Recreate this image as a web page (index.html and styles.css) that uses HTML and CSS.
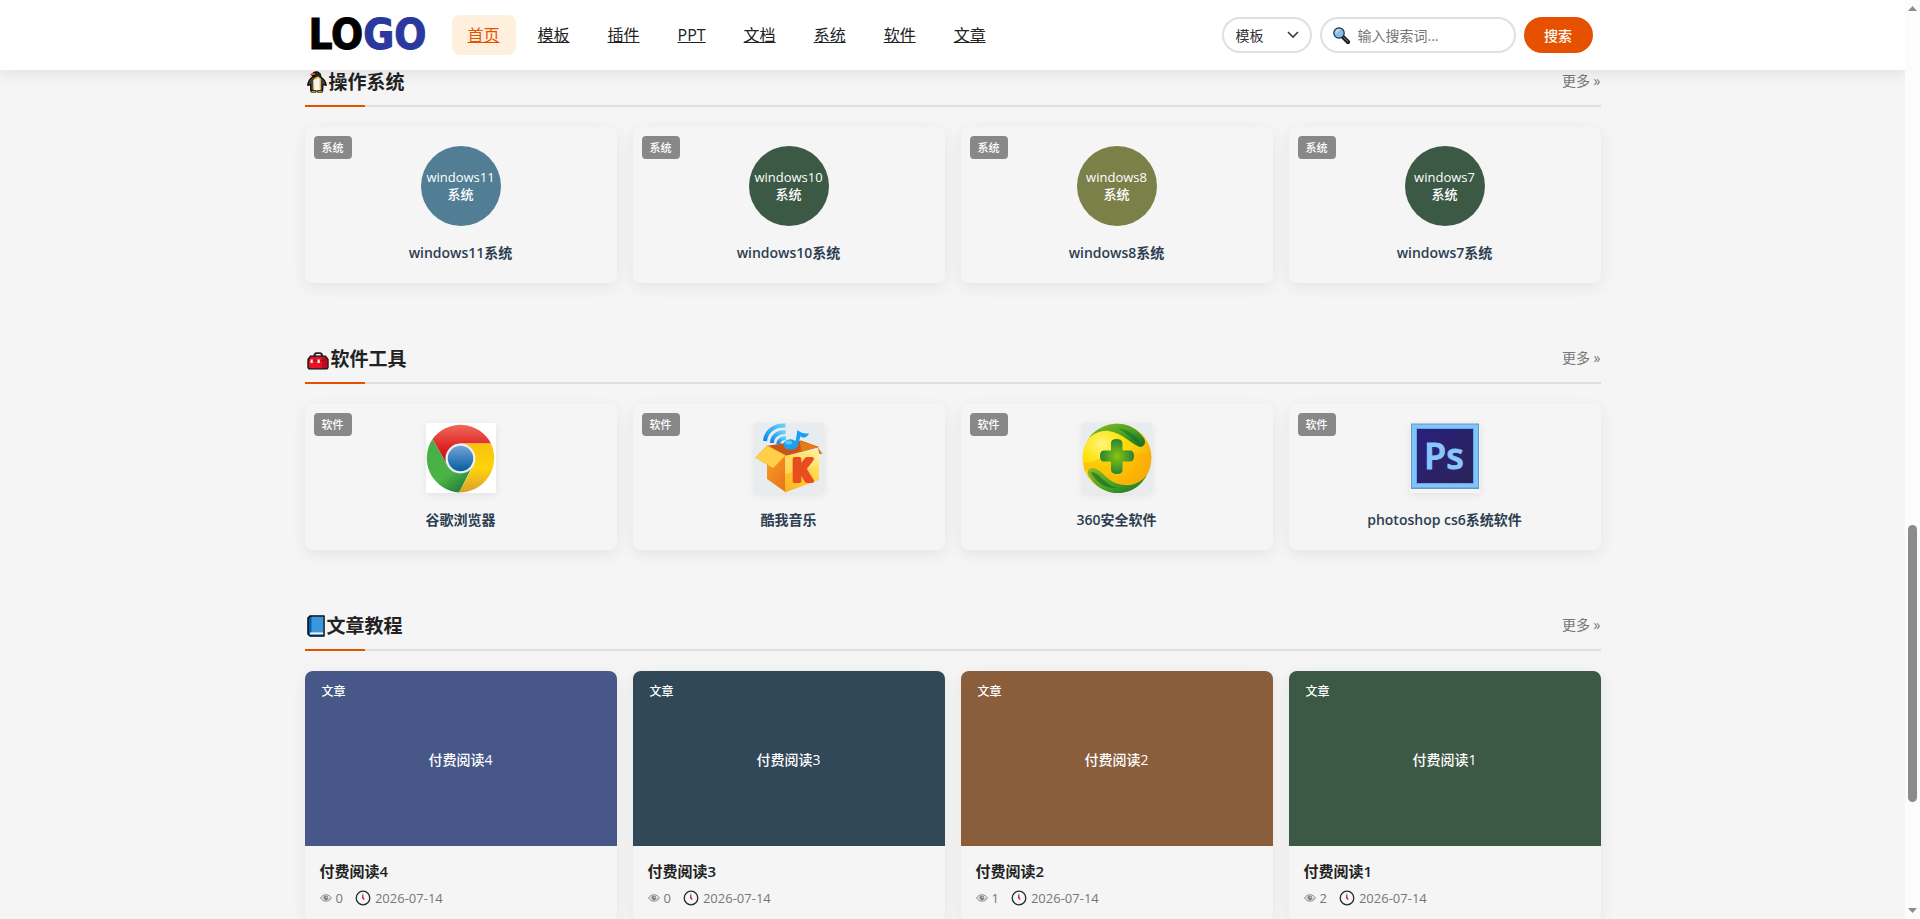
FILE: index.html
```
<!DOCTYPE html>
<html lang="zh-CN">
<head>
    <meta charset="UTF-8">
    <meta name="viewport" content="width=device-width, initial-scale=1.0">
    <title>首页</title>

    <link rel="stylesheet" href="styles.css">
</head>
<body>

    <!-- shared icons -->
    <svg class="sprite" aria-hidden="true">
        <symbol id="eye" viewBox="0 0 12 8">
            <path d="M.5 4C2 1.7 4 .8 6 .8S10 1.7 11.500 4C10 6.300 8 7.200 6 7.200S2 6.300 .5 4Z" fill="none" stroke="#8a8a8a" stroke-width="1"/>
            <circle cx="6" cy="4" r="2.400" fill="#858585"/>
            <path d="M2.500 4.500 4 2.500M8.500 5.500 10 4" stroke="#8a8a8a" stroke-width=".8"/>
            <circle cx="6.700" cy="3.300" r=".7" fill="#ddd"/>
        </symbol>
        <symbol id="clock" viewBox="0 0 16 16">
            <circle cx="8" cy="8" r="6.800" fill="#fafafa" stroke="#2b2b2b" stroke-width="1.300"/>
            <path d="M8 2.500v1M8 12.500v1M2.500 8h1M12.500 8h1" stroke="#aaa" stroke-width=".7"/>
            <path d="M7.800 8V4.300" stroke="#333" stroke-width="1"/>
            <path d="M7.600 6.500 8 8.500 9.300 9.600" fill="none" stroke="#e81224" stroke-width="1.300"/>
        </symbol>
    </svg>

    <div class="page">
        <header class="header">
            <div class="container header-inner">
                <a class="logo" href="#">LO<span>GO</span></a>
                <nav class="nav">
                    <a class="active" href="#">首页</a>
                    <a href="#">模板</a>
                    <a href="#">插件</a>
                    <a href="#">PPT</a>
                    <a href="#">文档</a>
                    <a href="#">系统</a>
                    <a href="#">软件</a>
                    <a href="#">文章</a>
                </nav>
                <form class="search">
                    <select class="search-type" aria-label="分类">
                        <option>模板</option>
                        <option>插件</option>
                        <option>PPT</option>
                        <option>文档</option>
                        <option>系统</option>
                        <option>软件</option>
                        <option>文章</option>
                    </select>
                    <label class="search-box">
                        <svg width="17" height="17" viewBox="0 0 17 17" aria-hidden="true">
                            <path d="M9.500 9.500 15 15" stroke="#111" stroke-width="4" stroke-linecap="round"/>
                            <path d="M10.500 10.200 14.800 14.500" stroke="#5c6468" stroke-width="1.500" stroke-linecap="round"/>
                            <circle cx="6" cy="6" r="5.200" fill="#83beec" stroke="#1d2b36" stroke-width="1.200"/>
                            <path d="M3 6.500A3.500 3.500 0 0 1 7 2.800" fill="none" stroke="#c5e5fb" stroke-width="1.400"/>
                        </svg>
                        <input type="text" placeholder="输入搜索词..." aria-label="输入搜索词">
                    </label>
                    <button class="search-btn" type="button">搜索</button>
                </form>
            </div>
        </header>

        <main class="container main">
            <section class="section">
                <div class="section-head">
                    <h2>
                        <svg width="20" height="22" viewBox="0 0 20 22" aria-hidden="true">
                            <path d="M6 5.500C2.500 8 .8 11 .8 14.500L3.500 13.500 3.800 20H15.600L16 13.500 19.200 14.500C19 11 16.500 8 13.800 6Z" fill="#3c4044" stroke="#090909" stroke-width="1.200" stroke-linejoin="round"/>
                            <path d="M4.800 4.500C4.500 2 7 .8 9.500 .8 12 .8 14 2.500 13.800 5.500L12.500 8 7.500 7.500 8.300 4.500Z" fill="#26292b" stroke="#080808"/>
                            <path d="M2.300 4.300 5.500 1.800 8 2.200 7.800 4Z" fill="#f25c16"/>
                            <path d="M6.200 9 12 5.800 13.800 9.500V18.500L10 20 6.200 18.500Z" fill="#f8f7f2"/>
                            <path d="M6.500 10.500V18M13.300 7V18" stroke="#e5b53a" stroke-width="1.300"/>
                            <path d="M7 8 11.500 6" stroke="#ffb900" stroke-width="1.400"/>
                            <path d="M4.200 19.500H9V21.300H4.200ZM10.500 19.500H15.300V21.300H10.500Z" fill="#f7b51d" stroke="#18140a" stroke-width=".8"/>
                        </svg>操作系统
                    </h2>
                    <a class="more" href="#">更多 »</a>
                </div>
                <div class="grid">
                    <a class="card" href="#">
                        <span class="tag">系统</span>
                        <span class="circle blue">windows11<br>系统</span>
                        <span class="card-title">windows11系统</span>
                    </a>
                    <a class="card" href="#">
                        <span class="tag">系统</span>
                        <span class="circle green">windows10<br>系统</span>
                        <span class="card-title">windows10系统</span>
                    </a>
                    <a class="card" href="#">
                        <span class="tag">系统</span>
                        <span class="circle olive">windows8<br>系统</span>
                        <span class="card-title">windows8系统</span>
                    </a>
                    <a class="card" href="#">
                        <span class="tag">系统</span>
                        <span class="circle green">windows7<br>系统</span>
                        <span class="card-title">windows7系统</span>
                    </a>
                </div>
            </section>

            <section class="section">
                <div class="section-head">
                    <h2>
                        <svg width="22" height="22" viewBox="0 0 22 22" aria-hidden="true">
                            <path d="M7.500 8V6.500L9 5.200H13.500L15 6.500V8" fill="none" stroke="#222" stroke-width="1.800"/>
                            <path d="M1 11.500 3.500 8.200H18.500L21 11.500V19.500L20 20.800H2L1 19.500Z" fill="#e81224" stroke="#0b0b0b" stroke-width="1.300" stroke-linejoin="round"/>
                            <path d="M15 9H18.200L20.300 11.800V20H15Z" fill="#b30f20"/>
                            <path d="M1.800 12.500H20.200" stroke="#a80f1b" stroke-width=".8"/>
                            <path d="M3.500 11.500H5.800V15H3.500ZM10.500 11.500H12.800V15H10.500Z" fill="#eee"/>
                        </svg>软件工具
                    </h2>
                    <a class="more" href="#">更多 »</a>
                </div>
                <div class="grid">
                    <a class="card" href="#">
                        <span class="tag">软件</span>
                        <svg class="app-icon" viewBox="0 0 70 70" aria-hidden="true">
                            <defs>
                                <linearGradient id="chromeRed" x1="0" y1="0" x2="0" y2="1">
                                    <stop offset="0" stop-color="#ee6a59"/>
                                    <stop offset=".6" stop-color="#df2327"/>
                                    <stop offset="1" stop-color="#b51720"/>
                                </linearGradient>
                                <linearGradient id="chromeYellow" x1="0" y1="0" x2="0" y2="1">
                                    <stop offset="0" stop-color="#f8c30b"/>
                                    <stop offset=".5" stop-color="#ffd30c"/>
                                    <stop offset="1" stop-color="#dba02c"/>
                                </linearGradient>
                                <linearGradient id="chromeGreen" x1="0" y1="0" x2=".6" y2="1">
                                    <stop offset="0" stop-color="#48ae45"/>
                                    <stop offset=".7" stop-color="#4bb347"/>
                                    <stop offset="1" stop-color="#2c863b"/>
                                </linearGradient>
                                <linearGradient id="chromeBlue" x1="0" y1="0" x2="0" y2="1">
                                    <stop offset="0" stop-color="#73a4d8"/>
                                    <stop offset="1" stop-color="#075c9f"/>
                                </linearGradient>
                            </defs>
                            <rect width="70" height="70" fill="#fff"/>
                            <path d="M6.500 16A34.500 34.500 0 0 1 65 20.500H34V35L19.500 39Z" fill="url(#chromeRed)"/>
                            <path d="M65 20.500A34.500 34.500 0 0 1 33 69.500L45 47 34.500 35V20.500Z" fill="url(#chromeYellow)"/>
                            <path d="M6.500 16A34.500 34.500 0 0 0 33 69.500L45 46 34.500 35 20 40Z" fill="url(#chromeGreen)"/>
                            <circle cx="34.500" cy="35.500" r="15" fill="#edf1f2"/>
                            <circle cx="34.500" cy="35.500" r="12.700" fill="url(#chromeBlue)"/>
                        </svg>
                        <span class="card-title">谷歌浏览器</span>
                    </a>
                    <a class="card" href="#">
                        <span class="tag">软件</span>
                        <svg class="app-icon" viewBox="0 0 70 70" aria-hidden="true">
                            <defs>
                                <linearGradient id="boxFront" x1="0" y1="1" x2="1" y2="0">
                                    <stop offset="0" stop-color="#fbb12a"/>
                                    <stop offset=".5" stop-color="#ffcf2d"/>
                                    <stop offset="1" stop-color="#fff08b"/>
                                </linearGradient>
                                <linearGradient id="boxSide" x1="0" y1="0" x2="1" y2="1">
                                    <stop offset="0" stop-color="#f99a24"/>
                                    <stop offset="1" stop-color="#e87319"/>
                                </linearGradient>
                                <linearGradient id="wave" x1="0" y1="1" x2="1" y2="0">
                                    <stop offset="0" stop-color="#0785ee"/>
                                    <stop offset="1" stop-color="#66d5fb"/>
                                </linearGradient>
                            </defs>
                            <rect width="70" height="70" fill="#e8ecef"/>
                            <path d="M12 23 47 17.500 65 24 32 33Z" fill="#c95617"/>
                            <path d="M46 18 65 24 47 29Z" fill="#e67b19"/>
                            <path d="M13 36 32 32V69.500L13 56Z" fill="url(#boxSide)"/>
                            <path d="M31 33 65 26V57L31 69.500Z" fill="url(#boxFront)"/>
                            <path d="M31 33 65 26V39C55 49 44 47 31 51Z" fill="#fff3a2" opacity=".4"/>
                            <path d="M1.500 34.500 13 22.500 31.500 32.500 19 45Z" fill="#ffcf47" stroke="#f1b538" stroke-width=".6"/>
                            <path d="M63.500 24 68.500 31H65.500Z" fill="#c67a18"/>
                            <g fill="none" stroke="url(#wave)" stroke-width="4">
                                <path d="M11 18C12 8 20 2 31.500 2.500"/>
                                <path d="M18 20C18 13 24 9 31.500 9"/>
                                <path d="M24 21C25 17 27 15 32 15"/>
                            </g>
                            <path d="M41 22 43.500 7C47 10 50 10.500 55 10.500 52 16 48 15 46.500 13L43.500 24Z" fill="#15a2f5"/>
                            <ellipse cx="36.500" cy="21.500" rx="7" ry="5.200" fill="#1ba0f2"/>
                            <ellipse cx="34.500" cy="19.500" rx="3.500" ry="2" fill="#58cafb"/>
                            <text class="box-letter" x="38" y="58">K</text>
                        </svg>
                        <span class="card-title">酷我音乐</span>
                    </a>
                    <a class="card" href="#">
                        <span class="tag">软件</span>
                        <svg class="app-icon" viewBox="0 0 70 70" aria-hidden="true">
                            <defs>
                                <radialGradient id="safeYellow" cx=".28" cy=".3" r=".8">
                                    <stop offset="0" stop-color="#fff57d"/>
                                    <stop offset=".35" stop-color="#ffe30c"/>
                                    <stop offset="1" stop-color="#f6aa08"/>
                                </radialGradient>
                                <linearGradient id="safeGreen" x1="0" y1="0" x2="1" y2="1">
                                    <stop offset="0" stop-color="#8dbb27"/>
                                    <stop offset=".55" stop-color="#45a126"/>
                                    <stop offset="1" stop-color="#176a25"/>
                                </linearGradient>
                                <radialGradient id="safeCross">
                                    <stop offset="0" stop-color="#8ac510"/>
                                    <stop offset="1" stop-color="#268336"/>
                                </radialGradient>
                            </defs>
                            <rect width="70" height="70" fill="#e8ecef"/>
                            <circle cx="35" cy="35" r="34.500" fill="url(#safeYellow)"/>
                            <path d="M2 40C20 39 20 29 36 27 48 25 60 36 68.500 28 69 49 55 63 40 61 25 59 22 45 2 48Z" fill="#ffa600" opacity=".38"/>
                            <path d="M6 16C19-3 48-5 61 14 64 18 64 23 58 24 49 21 41 10 27 8 18 7 11 11 6 16Z" fill="url(#safeGreen)"/>
                            <path d="M36 5C46 7 55 12 59 21 50 18 46 10 36 5Z" fill="#176e2b" opacity=".6"/>
                            <path d="M65 52C53 75 23 76 9 56 5 51 4 46 11 45 22 47 25 61 43 62 53 63 60 58 65 52Z" fill="url(#safeGreen)"/>
                            <path d="M9 49C17 49 23 62 35 65 23 66 13 58 9 49Z" fill="#126425" opacity=".6"/>
                            <path d="M29 20Q29 16 34.500 16T40.500 20V27.500H48Q52 27.500 52 33T48 38.500H40.500V47Q40.500 51 35 51T29 47V38.500H22Q18 38.500 18 33T22 27.500H29Z" fill="url(#safeCross)"/>
                        </svg>
                        <span class="card-title">360安全软件</span>
                    </a>
                    <a class="card" href="#">
                        <span class="tag">软件</span>
                        <svg class="app-icon" viewBox="0 0 70 70" aria-hidden="true">
                            <defs>
                                <linearGradient id="psBack" x1="0" y1="0" x2="1" y2="1">
                                    <stop offset="0" stop-color="#2a1f7e"/>
                                    <stop offset="1" stop-color="#2b2458"/>
                                </linearGradient>
                            </defs>
                            <rect x="1" y=".5" width="68" height="65.500" fill="#6497c2"/>
                            <rect x="2" y="1.500" width="66" height="63" fill="#80c4fd"/>
                            <rect x="6" y="5" width="58" height="56" fill="#69a8df"/>
                            <rect x="7" y="6" width="56" height="54" fill="url(#psBack)"/>
                            <text class="ps-text" x="14" y="46">Ps</text>
                        </svg>
                        <span class="card-title">photoshop cs6系统软件</span>
                    </a>
                </div>
            </section>

            <section class="section">
                <div class="section-head">
                    <h2>
                        <svg width="18" height="22" viewBox="0 0 18 22" aria-hidden="true">
                            <path d="M3 1H17V21H3L1 19V3Z" fill="#0063b1" stroke="#050505" stroke-width="1.500" stroke-linejoin="round"/>
                            <path d="M4.500 1.700H16.400V17H4.500Z" fill="#3a96dd"/>
                            <path d="M3.500 17.200H16.300V19.800H2.500Z" fill="#e9eef4"/>
                            <path d="M2 19.900H16.300" stroke="#0063b1" stroke-width=".7"/>
                        </svg>文章教程
                    </h2>
                    <a class="more" href="#">更多 »</a>
                </div>
                <div class="grid">
                    <a class="article" href="#">
                        <span class="tag tag-clear">文章</span>
                        <span class="cover indigo">付费阅读4</span>
                        <span class="article-body">
                            <span class="article-title">付费阅读4</span>
                            <span class="meta">
                                <span><svg width="12" height="8" aria-hidden="true"><use href="#eye"/></svg>0</span>
                                <span><svg width="16" height="16" aria-hidden="true"><use href="#clock"/></svg>2026-07-14</span>
                            </span>
                        </span>
                    </a>
                    <a class="article" href="#">
                        <span class="tag tag-clear">文章</span>
                        <span class="cover slate">付费阅读3</span>
                        <span class="article-body">
                            <span class="article-title">付费阅读3</span>
                            <span class="meta">
                                <span><svg width="12" height="8" aria-hidden="true"><use href="#eye"/></svg>0</span>
                                <span><svg width="16" height="16" aria-hidden="true"><use href="#clock"/></svg>2026-07-14</span>
                            </span>
                        </span>
                    </a>
                    <a class="article" href="#">
                        <span class="tag tag-clear">文章</span>
                        <span class="cover brown">付费阅读2</span>
                        <span class="article-body">
                            <span class="article-title">付费阅读2</span>
                            <span class="meta">
                                <span><svg width="12" height="8" aria-hidden="true"><use href="#eye"/></svg>1</span>
                                <span><svg width="16" height="16" aria-hidden="true"><use href="#clock"/></svg>2026-07-14</span>
                            </span>
                        </span>
                    </a>
                    <a class="article" href="#">
                        <span class="tag tag-clear">文章</span>
                        <span class="cover green">付费阅读1</span>
                        <span class="article-body">
                            <span class="article-title">付费阅读1</span>
                            <span class="meta">
                                <span><svg width="12" height="8" aria-hidden="true"><use href="#eye"/></svg>2</span>
                                <span><svg width="16" height="16" aria-hidden="true"><use href="#clock"/></svg>2026-07-14</span>
                            </span>
                        </span>
                    </a>
                </div>
            </section>
        </main>
    </div>

    <div class="scrollbar" aria-hidden="true">
        <svg width="9" height="5" viewBox="0 0 9 5"><path d="M0 5 4.500 0 9 5Z" fill="#8b8b8b"/></svg>
        <div class="track"><div class="thumb"></div></div>
        <svg width="9" height="5" viewBox="0 0 9 5"><path d="M0 0H9L4.500 5Z" fill="#8b8b8b"/></svg>
    </div>

</body>
</html>
```
FILE: styles.css
```
* {
    padding: 0;
    margin: 0;
    box-sizing: border-box;
}

body {
    display: flex;
    height: 100vh;
    overflow: hidden;
    background-color: #f5f5f5;
    color: #222;
    font-family: "Open Sans", "Noto Sans CJK SC", sans-serif;
    font-size: 14px;
}

a {
    color: inherit;
    text-decoration: none;
}

.sprite {
    position: absolute;
    width: 0;
    height: 0;
}

.page {
    position: relative;
    flex: 1;
    min-width: 0;
    height: 100vh;
    overflow: hidden;
}

.container {
    width: 100%;
    max-width: 1296px;
    margin: 0 auto;
}

/* header */
.header {
    position: absolute;
    top: 0;
    left: 0;
    right: 0;
    z-index: 10;
    background-color: white;
    box-shadow: 0 2px 16px rgba(0, 0, 0, 0.1);
}

.header-inner {
    display: flex;
    align-items: center;
    height: 70px;
    padding: 0 8px 0 4px;
}

.logo {
    width: 120px;
    font-family: "DejaVu Sans Condensed", sans-serif;
    font-size: 42px;
    font-weight: bold;
    line-height: 70px;
    color: black;
    -webkit-text-stroke: 1px;
}

.logo span {
    color: #2b399f;
}

.nav {
    display: flex;
    gap: 6px;
    margin-left: 23px;
}

.nav a {
    padding: 0 16px;
    border-radius: 8px;
    font-size: 16px;
    line-height: 40px;
    text-decoration: underline;
}

.nav .active {
    background-color: #fff0de;
    color: #e65100;
}

.search {
    display: flex;
    gap: 8px;
    margin-left: auto;
}

.search-type, .search-box {
    height: 36px;
    border: 2px solid #e0e0e0;
    border-radius: 18px;
    background-color: white;
}

.search-type {
    width: 90px;
    padding: 0 12px;
    appearance: none;
    background-image: url("data:image/svg+xml,%3Csvg xmlns='http://www.w3.org/2000/svg' viewBox='0 0 12 8'%3E%3Cpath d='M1 1l5 5 5-5' fill='none' stroke='%23343a40' stroke-width='1.6'/%3E%3C/svg%3E");
    background-repeat: no-repeat;
    background-position: right 11px center;
    background-size: 12px 8px;
    color: #333;
    font: inherit;
}

.search-box {
    display: flex;
    align-items: center;
    gap: 8px;
    width: 196px;
    padding: 0 11px;
}

.search-box svg {
    flex: none;
}

.search-box input {
    flex: 1;
    min-width: 0;
    border: none;
    outline: none;
    background: none;
    font: inherit;
}

.search-box input::placeholder {
    color: #757575;
}

.search-btn {
    width: 69px;
    height: 36px;
    border: none;
    border-radius: 18px;
    background-color: #e65100;
    color: white;
    font: inherit;
    font-weight: 500;
    cursor: pointer;
}

/* sections */
.main {
    padding-top: 66px;
}

.section {
    margin-bottom: 60px;
}

.section-head {
    position: relative;
    display: flex;
    justify-content: space-between;
    height: 41px;
    margin-bottom: 20px;
    border-bottom: 2px solid #e0e0e0;
}

.section-head::after {
    content: "";
    position: absolute;
    left: 0;
    bottom: -2px;
    width: 60px;
    height: 2px;
    background-color: #e65100;
}

.section-head h2 {
    display: flex;
    align-items: center;
    gap: 2px;
    height: 32px;
    padding-left: 2px;
    font-size: 19px;
    font-weight: bold;
    line-height: 32px;
}

.more {
    color: #777;
    line-height: 29px;
}

.grid {
    display: grid;
    grid-template-columns: repeat(4, 1fr);
    gap: 16px;
}

.card, .article {
    position: relative;
    display: flex;
    flex-direction: column;
    border-radius: 8px;
    background-color: #f5f5f5;
    box-shadow: 0 4px 16px rgba(0, 0, 0, 0.07);
}

.card {
    align-items: center;
    gap: 16px;
    padding: 19px;
}

.tag {
    position: absolute;
    top: 9px;
    left: 9px;
    padding: 0 8px;
    border-radius: 4px;
    background-color: #888;
    color: white;
    font-size: 11px;
    font-weight: 500;
    line-height: 23px;
}

.tag-clear {
    background: none;
    font-size: 12px;
}

.circle {
    display: flex;
    align-items: center;
    justify-content: center;
    width: 80px;
    height: 80px;
    border-radius: 50%;
    color: white;
    font-size: 13px;
    line-height: 17px;
    text-align: center;
    font-weight: 500;
}

.app-icon {
    width: 70px;
    height: 70px;
    box-shadow: 0 2px 8px rgba(0, 0, 0, 0.08);
}

.box-letter {
    fill: #e84c20;
    stroke: #e84c20;
    stroke-width: 4;
    stroke-linejoin: round;
    font: bold 30px "Open Sans", sans-serif;
}

.ps-text {
    fill: #87c8fc;
    stroke: #87c8fc;
    stroke-width: 1;
    font: 600 36px "Open Sans", sans-serif;
}

.card-title {
    color: #2c3e50;
    font-weight: 600;
    line-height: 22px;
}

.cover {
    display: flex;
    align-items: center;
    justify-content: center;
    height: 175px;
    border-radius: 8px 8px 0 0;
    color: white;
    font-weight: 500;
}

.article-body {
    display: flex;
    flex-direction: column;
    gap: 6px;
    padding: 14px 15px;
}

.article-title {
    font-size: 15px;
    font-weight: 600;
    line-height: 22px;
}

.meta {
    display: flex;
    gap: 12px;
    color: #777;
    font-size: 13px;
    line-height: 20px;
}

.meta span {
    display: flex;
    align-items: center;
    gap: 4px;
}

.blue {
    background-color: #517d95;
}

.green {
    background-color: #3b5945;
}

.olive {
    background-color: #7a8048;
}

.indigo {
    background-color: #475788;
}

.slate {
    background-color: #304858;
}

.brown {
    background-color: #8a5e3b;
}

/* scrollbar */
.scrollbar {
    display: flex;
    flex-direction: column;
    align-items: center;
    gap: 6px;
    width: 15px;
    padding: 6px 0;
    background-color: #fcfcfc;
}

.track {
    display: flex;
    align-items: flex-end;
    flex: 1;
    padding-bottom: 100px;
}

.thumb {
    width: 9px;
    height: 277px;
    border-radius: 5px;
    background-color: #8b8b8b;
}
```
